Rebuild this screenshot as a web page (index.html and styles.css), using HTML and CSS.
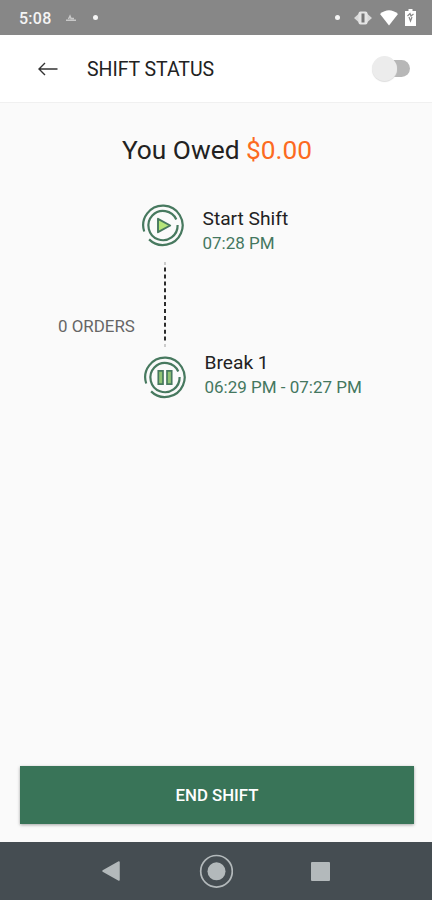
FILE: index.html
```html
<!DOCTYPE html>
<html lang="en">
<head>
<meta charset="utf-8">
<title>Shift Status</title>
<link rel="stylesheet" href="styles.css">
</head>
<body>
<div class="screen">
  <div class="status">
    <span class="clock">5:08</span>
    <svg class="note" width="12" height="8" viewBox="0 0 12 8"><path d="M1 6.200h10M3.500 5l1.500-3 1 2.500h3" fill="none" stroke="#c8c8c8" stroke-width="1.500"/></svg>
    <i class="dot"></i>
    <i class="dot right"></i>
    <svg class="vibrate" width="18" height="14" viewBox="0 0 18 14"><path d="M5 2.500 0 7l5 4.500zM13 2.500 18 7l-5 4.500z" fill="#d8d8d8"/><rect x="4.500" y=".5" width="9" height="13" rx="2" fill="#e4e4e4"/><path d="M9 2.500v9" stroke="#777" stroke-width="3"/></svg>
    <svg class="wifi" width="18" height="16" viewBox="0 0 18 16"><path d="M0 4Q9-3.500 18 4L9 15.500z" fill="#fff"/></svg>
    <svg class="battery" width="11" height="17" viewBox="0 0 11 17"><path d="M3.500 0h4v2H11v15H0V2h3.500z" fill="#fff"/><path d="M2.500 7 5 4.500 6 7 8.500 5M4 8l1.500 4L7 8" fill="none" stroke="#888" stroke-width="1.200"/></svg>
  </div>
  <header class="bar">
    <svg class="back" width="20" height="14" viewBox="0 0 20 14"><path d="M19.500 7H1M7 1 1 7l6 6" fill="none" stroke="#333" stroke-width="1.400"/></svg>
    <h1>SHIFT STATUS</h1>
    <span class="toggle"><i></i></span>
  </header>
  <main>
    <p class="owed">You Owed <b>$0.00</b></p>
    <section class="timeline">
      <div class="step">
        <svg class="icon" width="44" height="44" viewBox="-22 -22.500 44 44"><g fill="none" stroke="#47795f" stroke-width="2.200"><path d="M-18.800 6A19.700 19.700 0 1 1-13.900 13.900"/><path d="M13.300-6A14.600 14.600 0 1 0 14.600-.5"/></g><path d="M-5-6.700 7.200 0-5 6.700z" fill="#b5e57a" stroke="#47795f" stroke-width="1.900" stroke-linejoin="round"/></svg>
        <div class="info"><h2>Start Shift</h2><p>07:28 PM</p></div>
      </div>
      <div class="link"><span class="orders">0 ORDERS</span><svg class="dash" width="2" height="86" viewBox="0 0 2 86"><path d="M1 5.600v76" stroke="#2b2b2b" stroke-width="2" stroke-dasharray="4 2.900"/><path d="M1 0v3M1 82v3" stroke="#ccc" stroke-width="2"/></svg></div>
      <div class="step second">
        <svg class="icon" width="44" height="44" viewBox="-22 -22.500 44 44"><g fill="none" stroke="#47795f" stroke-width="2.200"><path d="M-18.800 6A19.700 19.700 0 1 1-13.900 13.900"/><path d="M13.300-6A14.600 14.600 0 1 0 14.600-.5"/></g><path d="M-6.700-6.700h4.700V6.700h-4.700zM2-6.700h4.700V6.700H2z" fill="#91c475" stroke="#47795f" stroke-width="1.700"/></svg>
        <div class="info"><h2>Break 1</h2><p>06:29 PM - 07:27 PM</p></div>
      </div>
    </section>
    <button class="end">END SHIFT</button>
  </main>
  <nav class="nav">
    <svg width="18" height="20" viewBox="0 0 18 20"><path d="M1 10 17 1v18z" fill="#b3b9bb" stroke="#b3b9bb" stroke-width="1.500" stroke-linejoin="round"/></svg>
    <svg width="34" height="34" viewBox="0 0 34 34"><circle cx="17.500" cy="17.300" r="15.800" fill="none" stroke="#b3b9bb" stroke-width="1.700"/><circle cx="17.500" cy="17.300" r="9" fill="#b3b9bb"/></svg>
    <svg width="19" height="19" viewBox="0 0 19 19"><rect width="19" height="19" rx="1" fill="#b3b9bb"/></svg>
  </nav>
</div>
</body>
</html>
```
FILE: styles.css
```css
* { box-sizing: border-box; margin: 0; padding: 0; }
body { font-family: Roboto, "Liberation Sans", sans-serif; }
svg { display: block; flex: none; }
.screen { width: 432px; height: 900px; display: flex; flex-direction: column; background: #fafafa; overflow: hidden; }
.status { height: 35px; flex: none; display: flex; align-items: center; background: #878787; padding: 0 16px 0 19px; }
.clock { width: 46px; font-size: 16px; line-height: 20px; font-weight: 500; color: #f4f4f4; letter-spacing: .25px; padding-top: 2px; }
.note { margin-right: 16px; }
.dot { width: 5px; height: 5px; border-radius: 50%; background: #f4f4f4; }
.right { margin-left: auto; margin-right: 14px; }
.vibrate { margin-right: 8px; }
.wifi { margin-right: 7px; }
.bar { height: 68px; flex: none; display: flex; align-items: center; background: #fff; border-bottom: 1px solid #f0f0f0; padding: 0 22px 0 38px; }
.back { margin-right: 29px; }
h1 { font-size: 19.500px; line-height: 24px; font-weight: 400; color: #222; padding-top: 3px; letter-spacing: -.05px; }
.toggle { width: 38px; height: 26px; margin-left: auto; display: flex; align-items: center; }
.toggle::after { content: ""; width: 26px; height: 17px; margin-left: -13px; border-radius: 0 9px 9px 0; background: #b7b7b7; }
.toggle i { position: relative; z-index: 1; flex: none; width: 25px; height: 25px; border-radius: 50%; background: #ececec; box-shadow: 0 1px 1px #ddd; }
main { flex: 1; display: flex; flex-direction: column; padding: 0 18px 18px 20px; }
.owed { margin-top: 31px; height: 32px; line-height: 32px; text-align: center; font-size: 26.300px; color: #222; }
.owed b { font-weight: 400; color: #fc6a21; }
.timeline { margin-top: 37px; }
.step { display: flex; margin-left: 121px; height: 59px; }
.second { margin-left: 123px; padding-top: 7px; }
.info { margin-left: 17.500px; padding-top: 3px; }
h2 { font-size: 19.200px; line-height: 25px; font-weight: 400; color: #222; }
.info p { font-size: 17px; line-height: 24px; color: #44775f; }
.second .info { margin-top: -8px; }
.link { display: flex; align-items: center; height: 86px; }
.orders { width: 144px; padding: 42px 0 0 38px; white-space: nowrap; font-size: 16.900px; color: #666; }
.end { margin-top: auto; height: 58px; border: 0; background: #397458; color: #fff; font: 500 16.800px Roboto, sans-serif; box-shadow: 0 1px 3px rgba(0,0,0,.35); }
.nav { height: 58px; flex: none; display: flex; align-items: center; background: #454d52; padding: 0 102px; justify-content: space-between; }
```
